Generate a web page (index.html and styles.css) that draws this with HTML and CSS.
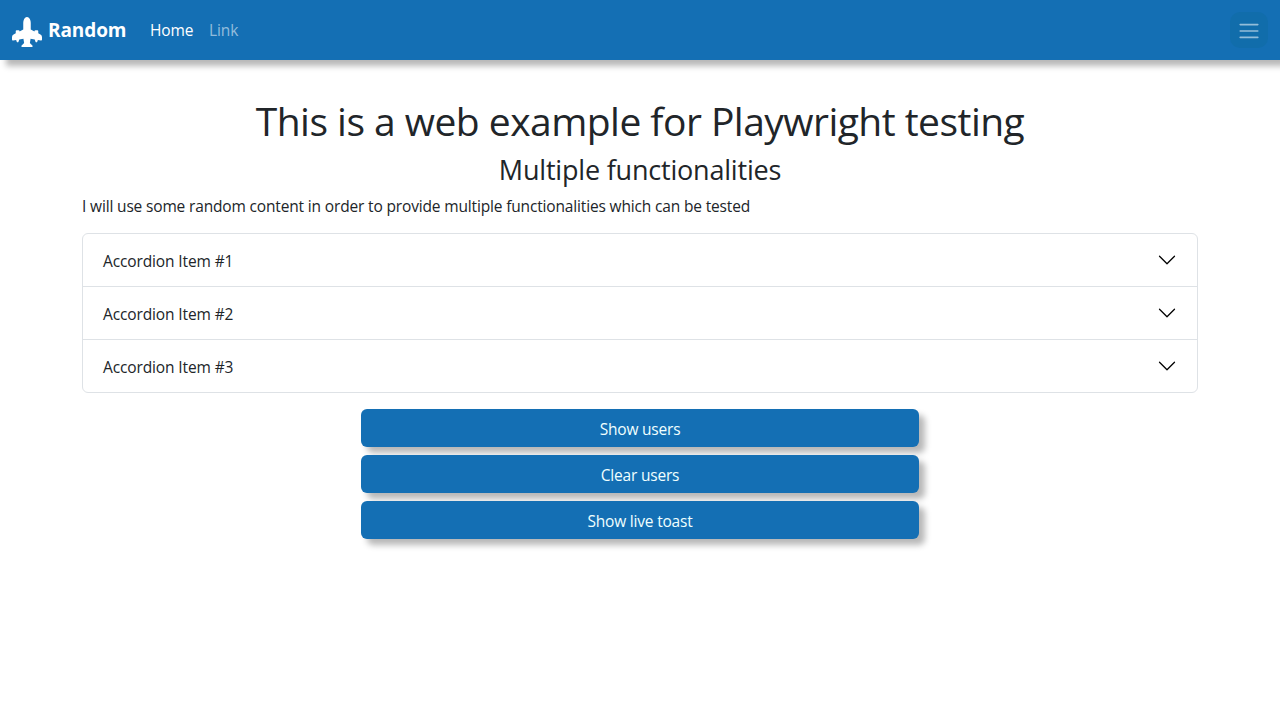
FILE: index.html
```html
<!DOCTYPE html>
<html lang="en">
<head>
<meta charset="utf-8">
<title>Random</title>
<link rel="stylesheet" href="styles.css">
</head>
<body>
<nav class="navbar">
  <a class="brand"><svg class="brand-icon" viewBox="0 0 16 16" fill="currentColor"><path d="M8 0c-.787 0-1.292.592-1.572 1.151A4.35 4.35 0 0 0 6 3v3.691l-2 1V7.5a.5.5 0 0 0-.5-.5h-1a.5.5 0 0 0-.5.5v1.191l-1.17.585A1.5 1.5 0 0 0 0 10.618V12a.5.5 0 0 0 .582.493l1.631-.272.313.937a.5.5 0 0 0 .948 0l.405-1.214 2.21-.369.375 2.253-1.318 1.318A.5.5 0 0 0 5.5 16h5a.5.5 0 0 0 .354-.854l-1.318-1.318.375-2.253 2.21.369.405 1.214a.5.5 0 0 0 .948 0l.313-.937 1.63.272A.5.5 0 0 0 16 12v-1.382a1.5 1.5 0 0 0-.83-1.342L14 8.691V7.5a.5.5 0 0 0-.5-.5h-1a.5.5 0 0 0-.5.5v.191l-2-1V3c0-.568-.14-1.271-.428-1.849C9.292.591 8.787 0 8 0"/></svg><span class="brand-name">Random</span></a>
  <a class="nav-link nav-home">Home</a>
  <a class="nav-link muted">Link</a>
  <button class="menu" aria-label="Menu"><svg viewBox="0 0 30 30" width="24" height="24"><path stroke="rgba(255,255,255,.55)" stroke-linecap="round" stroke-miterlimit="10" stroke-width="2" d="M4 7h22M4 15h22M4 23h22"/></svg></button>
</nav>
<main class="container">
  <h1 class="title">This is a web example for Playwright testing</h1>
  <h3 class="subtitle">Multiple functionalities</h3>
  <p class="intro">I will use some random content in order to provide multiple functionalities which can be tested</p>
  <div class="accordion">
    <div class="item"><span>Accordion Item #1</span><svg class="chevron" viewBox="0 0 16 16"><path fill="none" stroke="#000" stroke-linecap="round" stroke-linejoin="round" d="m2 5 6 6 6-6"/></svg></div>
    <div class="item"><span>Accordion Item #2</span><svg class="chevron" viewBox="0 0 16 16"><path fill="none" stroke="#000" stroke-linecap="round" stroke-linejoin="round" d="m2 5 6 6 6-6"/></svg></div>
    <div class="item"><span>Accordion Item #3</span><svg class="chevron" viewBox="0 0 16 16"><path fill="none" stroke="#000" stroke-linecap="round" stroke-linejoin="round" d="m2 5 6 6 6-6"/></svg></div>
  </div>
  <div class="actions">
    <button class="btn">Show users</button>
    <button class="btn">Clear users</button>
    <button class="btn">Show live toast</button>
  </div>
</main>
</body>
</html>
```
FILE: styles.css
```css
* { box-sizing: border-box; }
body {
  margin: 0;
  min-height: 100vh;
  background: #fff;
  color: #212529;
  font: 400 15.5px/24px "Open Sans", "Noto Sans", sans-serif;
}
.navbar {
  display: flex;
  align-items: center;
  height: 60px;
  padding: 0 12px;
  background: #146fb4;
  box-shadow: 6px 6px 6px #b8b8b8;
  color: #fff;
}
.brand { display: flex; align-items: center; width: 130px; gap: 6px; }
.brand-icon { width: 30px; height: 30px; margin-top: 4px; }
.brand-name { font-size: 19px; font-weight: 700; letter-spacing: -.1px; }
.nav-link { padding: 0 8px; letter-spacing: -.1px; }
.muted { color: rgba(255, 255, 255, .55); }
.nav-home { width: 59px; }
.menu {
  display: flex;
  align-items: center;
  justify-content: center;
  width: 38px;
  height: 36px;
  margin-left: auto;
  padding: 2px 0 0;
  border: 0;
  border-radius: 10px;
  background: #116dab;
}
.container { width: 1116px; margin: 0 auto; padding-top: 37px; }
.title, .subtitle { margin: 0 0 8px; font-weight: 400; text-align: center; white-space: nowrap; }
.title { font-size: 39px; line-height: 48px; letter-spacing: -.53px; }
.subtitle { font-size: 27px; line-height: 33px; letter-spacing: -.2px; }
.intro { margin: 0 0 15px; white-space: nowrap; letter-spacing: -.157px; }
.accordion { border: 1px solid #dee2e6; border-radius: 6px; letter-spacing: -.12px; }
.item {
  display: flex;
  align-items: center;
  justify-content: space-between;
  height: 52px;
  padding: 2px 20px 0;
}
.item + .item { height: 53px; border-top: 1px solid #dee2e6; }
.chevron { width: 20px; height: 20px; margin-bottom: 2px; }
.actions { display: grid; gap: 8px; width: 558px; margin: 16px auto 0; }
.btn {
  height: 38px;
  padding: 2px 0 0;
  border: 0;
  border-radius: 6px;
  background: #146fb4;
  box-shadow: 6px 6px 6px #b8b8b8;
  color: #f0ffff;
  font: inherit;
  letter-spacing: -.2px;
}
```
